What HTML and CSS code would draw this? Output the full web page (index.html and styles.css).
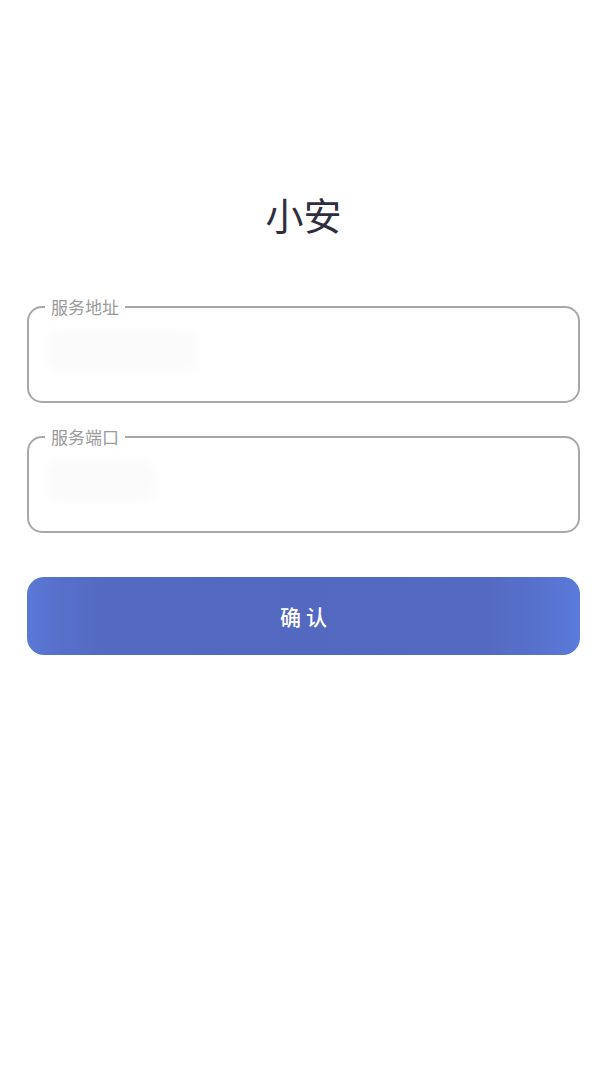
FILE: index.html
```html
<!DOCTYPE html>
<html lang="zh-CN">
<head>
<meta charset="utf-8">
<title>小安</title>
<link rel="stylesheet" href="styles.css">
</head>
<body>
<main class="page">
  <h1 class="title">小安</h1>
  <form class="form">
    <fieldset class="field">
      <legend class="field-label">服务地址</legend>
      <div class="field-body"><span class="blur blur-a"></span></div>
    </fieldset>
    <fieldset class="field field-second">
      <legend class="field-label">服务端口</legend>
      <div class="field-body"><span class="blur blur-b"></span></div>
    </fieldset>
    <button type="button" class="submit">确认</button>
  </form>
</main>
</body>
</html>
```
FILE: styles.css
```css
html, body {
  margin: 0;
  padding: 0;
  background: #ffffff;
}
body {
  font-family: "Noto Sans CJK SC", "Noto Sans", sans-serif;
  width: 607px;
  height: 1080px;
}
.page {
  display: flex;
  flex-direction: column;
  padding: 0 27px;
}
.title {
  margin: 191px 0 0;
  height: 46px;
  line-height: 46px;
  font-size: 38px;
  font-weight: 400;
  color: #2e2e40;
  text-align: center;
}
.form {
  display: flex;
  flex-direction: column;
  margin-top: 60px;
}
.field {
  margin: 0;
  padding: 0;
  border: 2px solid #a8a8a8;
  border-radius: 15px;
  min-width: 0;
}
.field-second {
  margin-top: 24px;
}
.field-label {
  margin-left: 16px;
  padding: 0 6px;
  font-size: 17px;
  line-height: 20px;
  color: #9a9a9a;
}
.field-body {
  height: 84px;
  padding: 6px 0 0 18px;
  box-sizing: border-box;
}
.blur {
  display: block;
  background: #fbfbfb;
  border-radius: 10px;
  filter: blur(4px);
}
.blur-a {
  width: 150px;
  height: 44px;
  margin-top: 6px;
}
.blur-b {
  width: 108px;
  height: 44px;
  margin-top: 6px;
}
.submit {
  margin-top: 44px;
  height: 78px;
  border: none;
  border-radius: 17px;
  background: linear-gradient(90deg, #5b78d8 0%, #5670c9 6%, #5469c0 15%, #5368bf 50%, #5469c0 82%, #5672cc 93%, #5b7adc 100%);
  color: #ffffff;
  font-family: "Noto Sans CJK SC", "Noto Sans", sans-serif;
  font-size: 21px;
  font-weight: 500;
  letter-spacing: 5px;
  text-indent: 5px;
  padding: 0;
}
```
